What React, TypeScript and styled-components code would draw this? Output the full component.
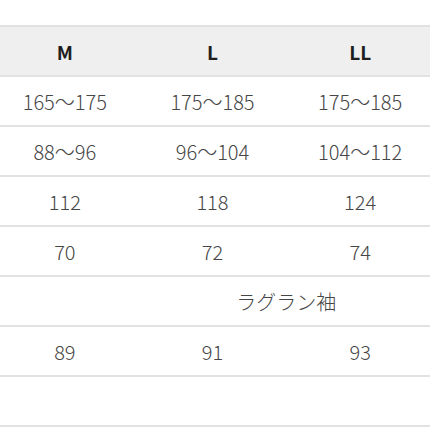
import * as React from 'react';
import styled, { createGlobalStyle } from 'styled-components';

const GlobalStyle = createGlobalStyle`
  html, body {
    margin: 0;
    padding: 0;
    background: #ffffff;
  }
  body {
    width: 430px;
    height: 430px;
    overflow: hidden;
    font-family: "Noto Sans CJK JP", "Noto Sans", sans-serif;
  }
`;

const Page = styled.div`
  padding-top: 25px;
  width: 430px;
  overflow: hidden;
`;

const Table = styled.table`
  width: 443px;
  margin-left: -9px;
  border-collapse: collapse;
  table-layout: fixed;
  border-top: 2px solid #e2e2e2;
`;

const Row = styled.tr`
  border-bottom: 2px solid #e2e2e2;
`;

const HeadCell = styled.th`
  height: 48px;
  padding: 0;
  background: #efefef;
  color: #1e1e1e;
  font-size: 19px;
  font-weight: 700;
  text-align: center;
  vertical-align: middle;
`;

const Cell = styled.td`
  height: 48px;
  padding: 0;
  color: #464646;
  font-size: 20px;
  font-weight: 300;
  text-align: center;
  vertical-align: middle;
  white-space: nowrap;
`;

const sizes = ['M', 'L', 'LL'];

const rows: string[][] = [
  ['165〜175', '175〜185', '175〜185'],
  ['88〜96', '96〜104', '104〜112'],
  ['112', '118', '124'],
  ['70', '72', '74'],
];

export default function App() {
  return (
    <>
      <GlobalStyle />
      <Page>
        <Table>
          <thead>
            <Row>
              {sizes.map((s) => (
                <HeadCell key={s}>{s}</HeadCell>
              ))}
            </Row>
          </thead>
          <tbody>
            {rows.map((r, i) => (
              <Row key={i}>
                {r.map((v, j) => (
                  <Cell key={j}>{v}</Cell>
                ))}
              </Row>
            ))}
            <Row>
              <Cell />
              <Cell colSpan={2}>ラグラン袖</Cell>
            </Row>
            <Row>
              <Cell>89</Cell>
              <Cell>91</Cell>
              <Cell>93</Cell>
            </Row>
            <Row>
              <Cell />
              <Cell />
              <Cell />
            </Row>
          </tbody>
        </Table>
      </Page>
    </>
  );
}
